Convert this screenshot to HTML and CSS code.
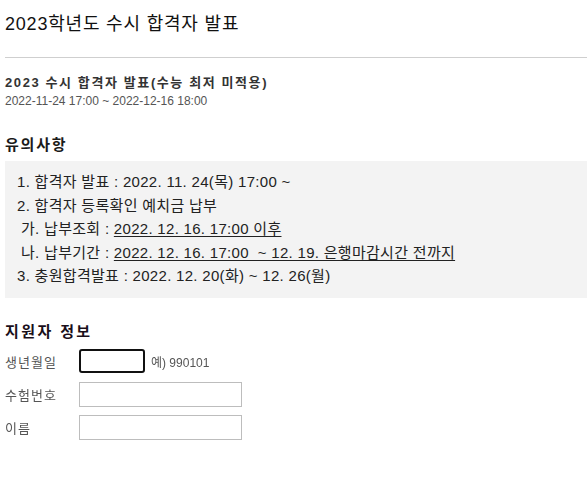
FILE: index.html
```html
<!DOCTYPE html>
<html lang="ko">
<head>
    <meta charset="UTF-8">
    <meta name="viewport" content="width=device-width, initial-scale=1.0">
    <title>2023학년도 수시 합격자 발표</title>
    <link rel="stylesheet" href="styles.css">
</head>
<body>

<h1 class="page-title">2023학년도 수시 합격자 발표</h1>
<hr class="divider">

<!-- 발표 정보 -->
<div class="notice-head">
    <h2 class="notice-title">2023 수시 합격자 발표(수능 최저 미적용)</h2>
    <p class="notice-date">2022-11-24 17:00 ~ 2022-12-16 18:00</p>
</div>

<h3 class="section-title">유의사항</h3>
<div class="guide-box">
    <p>1. 합격자 발표 : 2022. 11. 24(목) 17:00 ~</p>
    <p>2. 합격자 등록확인 예치금 납부</p>
    <p class="sub">가. 납부조회 : <u>2022. 12. 16. 17:00 이후</u></p>
    <p class="sub">나. 납부기간 : <u>2022. 12. 16. 17:00 &nbsp;~ 12. 19. 은행마감시간 전까지</u></p>
    <p>3. 충원합격발표 : 2022. 12. 20(화) ~ 12. 26(월)</p>
</div>

<h3 class="section-title info-title">지원자 정보</h3>
<form class="info-form">
    <div class="form-row">
        <label for="birth">생년월일</label>
        <input type="text" id="birth" class="short" autofocus>
        <span class="hint">예) 990101</span>
    </div>
    <div class="form-row">
        <label for="examNo">수험번호</label>
        <input type="text" id="examNo">
    </div>
    <div class="form-row">
        <label for="name">이름</label>
        <input type="text" id="name">
    </div>
</form>

</body>
</html>
```

FILE: styles.css
```css
/* 기본 */
body {
    font-family: "Liberation Sans", "Noto Sans CJK KR", sans-serif;
    margin: 0;
    padding: 0 0 0 5px;
    background: #ffffff;
    color: #111;
}
.page-title {
    margin: 12px 0 0;
    font-size: 18px;
    font-weight: normal;
    line-height: 24px;
    color: #111;
    letter-spacing: 0.8px;
}
.divider {
    margin: 21px 0 0;
    border: none;
    border-top: 1px solid #cfcfcf;
    height: 0;
}
.notice-head {
    padding-top: 16px;
}
.notice-title {
    margin: 0;
    font-size: 13px;
    font-weight: bold;
    line-height: 18px;
    color: #333;
    letter-spacing: 1.6px;
}
.notice-date {
    margin: 1px 0 0;
    font-size: 12px;
    line-height: 16px;
    color: #555;
}
.section-title {
    margin: 26px 0 0;
    font-size: 15px;
    font-weight: bold;
    line-height: 20px;
    color: #1a1a1a;
    letter-spacing: 1.8px;
}
.guide-box {
    margin-top: 6px;
    background: #f3f3f3;
    padding: 9px 0 10px 12px;
    font-size: 15px;
    line-height: 23.5px;
    color: #222;
    letter-spacing: 0.3px;
}
.guide-box p {
    margin: 0;
}
.guide-box .sub {
    padding-left: 4px;
}
.guide-box u {
    text-decoration-thickness: 1px;
    text-underline-offset: 2px;
}
.info-title {
    margin-top: 24px;
    color: #1a0f1a;
    letter-spacing: 2.4px;
}
.info-form {
    margin-top: 7px;
}
.form-row {
    display: flex;
    align-items: center;
    height: 25px;
    margin-bottom: 8px;
}
.form-row label {
    width: 74px;
    font-size: 13px;
    color: #555;
    letter-spacing: 1px;
}
.form-row input {
    box-sizing: border-box;
    width: 163px;
    height: 25px;
    margin: 0;
    border: 1px solid #bdbdbd;
    padding: 0 4px;
    font-size: 13px;
    background: #fff;
}
.form-row input.short {
    width: 66px;
    height: 24px;
    border: 2px solid #111;
    border-radius: 3px;
    outline: none;
}
.hint {
    margin-left: 6px;
    font-size: 12px;
    color: #555;
}
```
